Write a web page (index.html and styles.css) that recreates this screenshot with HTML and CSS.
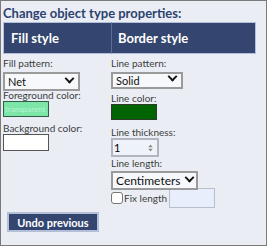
FILE: index.html
```html
<!DOCTYPE html>
<html lang="en">
<head>
  <meta charset="UTF-8" />
  <title>Change object type properties</title>
  <link rel="stylesheet" href="styles.css">
</head>
<body>
  <div class="panel">
    <h2 class="title">Change object type properties:</h2>

    <div class="props">
      <div class="head">Fill style</div>
      <div class="head head-right">Border style</div>

      <div class="col">
        <label for="fillPattern">Fill pattern:</label>
        <div class="select sel-net">
          <select id="fillPattern"><option>Net</option></select>
        </div>

        <label class="lbl-fg">Foreground color:</label>
        <input type="text" class="swatch swatch-fg" value="transparent" readonly>

        <label class="lbl-bg">Background color:</label>
        <input type="text" class="swatch swatch-bg" value="" readonly>
      </div>

      <div class="col col-right">
        <label for="linePattern">Line pattern:</label>
        <div class="select sel-solid">
          <select id="linePattern"><option>Solid</option></select>
        </div>

        <label class="lbl-lc">Line color:</label>
        <input type="text" class="swatch swatch-line" value="" readonly>

        <label class="lbl-lt" for="thickness">Line thickness:</label>
        <div class="number">
          <input type="text" id="thickness" value="1">
          <svg width="9" height="12" viewBox="0 0 9 12"><rect x="0" y="0" width="9" height="12" fill="#f3f4f7"/><path d="M1.5 5 L4.5 1.5 L7.5 5 Z M1.5 7 L4.5 10.5 L7.5 7 Z" fill="#8a8a8a"/></svg>
        </div>

        <label class="lbl-ll" for="lineLength">Line length:</label>
        <div class="select sel-unit">
          <select id="lineLength"><option>Centimeters</option></select>
        </div>

        <div class="fix-row">
          <input type="checkbox" id="fixLength">
          <label for="fixLength">Fix length</label>
          <input type="text" class="fix-input">
        </div>
      </div>
    </div>

    <button class="undo">Undo previous</button>
  </div>
</body>
</html>
```

FILE: styles.css
```css
* {
  box-sizing: border-box;
}

body {
  margin: 0;
  font-family: Lato, "Open Sans", sans-serif;
  background: #eaeef4;
}

.panel {
  width: 267px;
  height: 246px;
  border: 1px solid #7a7a7a;
  background: #eaeef4;
  padding: 0 2px;
  display: flex;
  flex-direction: column;
}

.title {
  margin: 0;
  padding-top: 4px;
  font-size: 13px;
  line-height: 16px;
  font-weight: bold;
  color: #2e4270;
  height: 21px;
}

.props {
  display: grid;
  grid-template-columns: 108px 145px;
}

.head {
  background: #344670;
  color: #fff;
  font-size: 13px;
  font-weight: bold;
  height: 32px;
  line-height: 30px;
  padding-left: 7px;
  border-top: 1px solid #b3bfd9;
  border-bottom: 1px solid #b3bfd9;
  border-left: 1px solid #b3bfd9;
}

.head-right {
  padding-left: 6px;
  border-right: 1px solid #b3bfd9;
  border-left: 1px solid #5d6d94;
}

.col {
  padding-top: 3px;
  display: flex;
  flex-direction: column;
  align-items: flex-start;
}

label {
  font-size: 10px;
  line-height: 12px;
  color: #3d3d3d;
}

.select {
  position: relative;
}

.select select {
  appearance: none;
  -webkit-appearance: none;
  font-family: Lato, sans-serif;
  font-size: 11px;
  color: #111;
  background: #f7f8fb;
  border: 2px solid #9a9a9a;
  border-radius: 0;
  padding: 0 0 0 3px;
  width: 100%;
  height: 100%;
}

.select::after {
  content: "";
  position: absolute;
  right: 7px;
  top: 50%;
  width: 5px;
  height: 5px;
  border-right: 2px solid #111;
  border-bottom: 2px solid #111;
  transform: translateY(-70%) rotate(45deg);
  pointer-events: none;
}

.sel-net {
  width: 77px;
  height: 19px;
  margin-top: 1px;
}

.sel-solid {
  width: 72px;
  height: 17px;
  margin-bottom: 6px;
}

.sel-unit {
  width: 87px;
  height: 19px;
}

.sel-unit select {
  font-size: 12px;
  padding: 0 0 0 3px;
}

.sel-unit::after {
  right: 5px;
}

.swatch {
  width: 46px;
  height: 16px;
  border: 1px solid #444;
  padding: 0 1px;
  font-family: Lato, sans-serif;
  font-size: 8px;
}

.swatch-fg {
  background: #7de5a7;
  color: #b5f5d2;
  border-color: #2f5e47;
  margin-bottom: 5px;
}

.swatch-bg {
  background: #fff;
  height: 17px;
  border-color: #555;
}

.swatch-line {
  background: #006400;
  border-color: #2f3a2f;
  margin-bottom: 6px;
}

.number {
  display: flex;
  align-items: center;
  width: 48px;
  height: 19px;
  border: 2px solid #b0b5bf;
  background: #eef2fb;
  padding-right: 3px;
}

.number input {
  width: 34px;
  border: none;
  background: transparent;
  font-family: Lato, sans-serif;
  font-size: 11px;
  padding: 0 0 0 1px;
  outline: none;
}

.fix-row {
  display: flex;
  align-items: center;
  font-size: 10px;
}

.fix-row input[type="checkbox"] {
  appearance: none;
  -webkit-appearance: none;
  width: 12px;
  height: 12px;
  margin: 0 1px 0 0;
  border: 1px solid #777;
  border-radius: 3px;
  background: #fff;
}

.fix-input {
  width: 46px;
  height: 20px;
  margin-left: 2px;
  border: 1px solid #b9bfca;
  background: #e8eefc;
}

.undo {
  margin-top: auto;
  margin-bottom: 13px;
  margin-left: 4px;
  width: 92px;
  height: 20px;
  background: #344670;
  color: #fff;
  font-family: Lato, sans-serif;
  font-size: 11px;
  font-weight: bold;
  border: 2px solid #b3bfd9;
  cursor: pointer;
}
```
